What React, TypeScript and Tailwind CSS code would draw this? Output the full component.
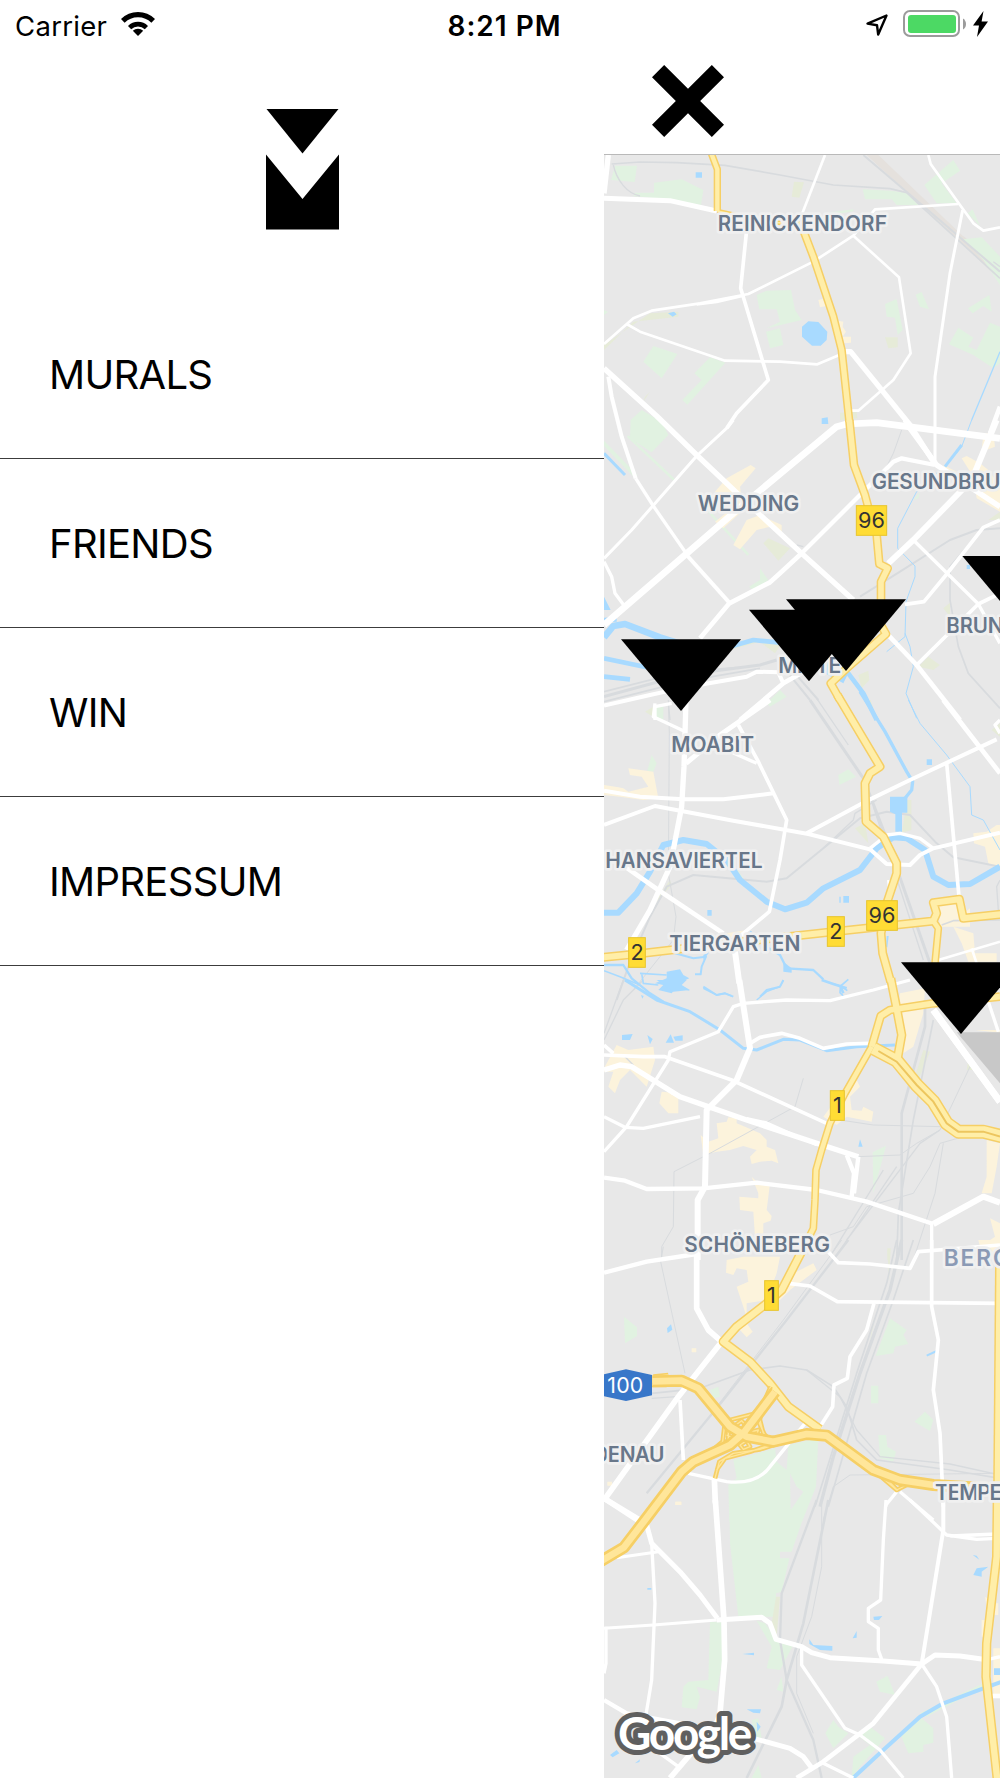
import { useState } from 'react';

const MENU_ITEMS = ['MURALS', 'FRIENDS', 'WIN', 'IMPRESSUM'];

type Line = [width: number, d: string];

interface MapSection {
  y: number;
  parks: string;
  scrub: string;
  areas: string;
  ponds: string;
  rivers: Line[];
  rails: Line[];
  streets: Line[];
  roads: Line[];
}

// The city map is split into horizontal sections, each with its own y origin
const SECTIONS: MapSection[] = [
  {
    y: 0,
    parks:
      'M45 47L111 47L104 96L33 90Z M162 98L245 88L310 120L303 165L215 150L100 138L105 128L162 128Z M788 118L870 122L920 128L955 165L890 165L875 148L795 148Z M1060 30L1080 62L1025 100L1070 160L1010 160L973 105Z M470 435L500 422L573 420L585 480L605 510L500 535L540 515L530 478L478 478Z M498 545L540 535L550 585L510 595Z M160 588L232 612L185 685L130 635Z M330 622L376 638L262 764L247 750L305 690L283 670Z M855 462L890 447L908 540L893 555L885 503L860 500Z M947 434L965 426L987 478L960 470Z M1104 475L1168 435L1175 485L1150 468L1118 490Z M1075 533L1120 563L1105 590L1130 600L1170 518L1200 530L1200 640L1180 655L1120 615L1047 583Z M1090 268L1145 262L1200 320L1200 405L1150 330Z M12 480L24 486L12 495Z M92 810L125 780L185 815L205 855L155 907L90 865Z M1103 190L1118 178L1140 228Z M670 190L760 178L760 184L690 196Z',
    scrub: 'M582 95L612 97L598 143L575 140Z M150 490L235 485L235 500L100 515L12 600L12 585Z M855 562L893 562L893 592L865 595Z M720 788L770 785L772 805L720 810Z M150 725L130 755L135 740Z',
    areas: 'M655 450L668 447L680 468L660 472Z M715 512L730 515L728 530L738 545L728 560L753 560L753 578L733 580Z',
    ponds: 'M287 67h19v16h-19z M625 514L655 516L682 545L680 570L662 587L636 587L606 560L606 530Z M204 490L222 485L230 493L218 500Z M665 805l18 -3l2 20l-20 0Z M675 235h20v15h-20z',
    rivers: [[4, 'M1200 605L1165 690L1115 810']],
    rails: [
      [5, 'M35 42L120 36L230 38L375 46L540 75L700 105L870 116L920 128L970 175L1200 385'],
      [6, 'M790 15L960 160L1200 365'],
      [4, 'M40 45C50 90 80 130 120 138'],
      [4, 'M1180 335L1200 350'],
    ],
    streets: [
      [16, 'M25 15L12 130'],
      [15, 'M12 145L210 152L350 183'],
      [16, 'M730 605L752 605L930 825L1000 935'],
      [16, 'M12 655L170 798L290 915'],
      [11, 'M440 240L422 415L505 690L410 790L380 835'],
      [8, 'M675 15L607 190'],
      [8, 'M985 15L992 42L1080 165L1120 220L1150 242L1200 232'],
      [8, 'M1075 162L825 178L760 257L640 335L445 432L300 460L155 482L100 505L12 582'],
      [8, 'M430 437L350 456L290 463'],
      [8, 'M760 257L897 382L932 610L880 690L775 782L750 782'],
      [9, 'M1088 180L1050 370L1005 680L1005 945'],
      [8, 'M80 522L120 545L375 632L540 635L652 643L725 612'],
      [12, 'M25 680L35 740L65 860L107 985'],
      [14, 'M1200 770L1170 850'],
    ],
    roads: [
      [22, 'M332 5L352 58L352 183'],
      [14, 'M352 183L430 200L480 215L600 222'],
      [25, 'M600 215L640 320L700 500L725 600L748 815'],
    ],
  },
  {
    y: 810,
    parks: 'M12 62L112 165L105 175L12 78Z M80 50L86 46L226 178L220 183Z M285 235L291 231L448 402L442 407Z M480 445L505 480L460 510L447 500L480 480Z M500 850L540 810L560 830L510 860Z M940 240L960 215L955 235Z',
    scrub: 'M490 370L505 355L570 385L535 422Z M955 740L985 710L1020 735L1000 750Z M1030 565L1050 548L1050 590Z M775 765L805 752L808 780L785 805Z M485 670h60l-20 30z M1165 300l35 -25v25z M135 875l25-15v30z M390 690l90-35v10z',
    areas:
      'M345 215L380 175L452 135L467 145L420 200L430 270L370 325L345 305L390 270Z M400 375L440 300L480 285L545 315L545 345L510 320L470 330L420 388Z M1085 115L1100 108L1140 130L1165 150L1200 200L1200 275L1130 235L1120 170Z M1150 40h30l5 40l-40 15z M1030 135l40 20l-20 20z',
    ponds: 'M690 700L745 760L730 790L675 760Z M12 530L32 570L12 570Z M1100 435h10v12h-10z',
    rivers: [
      [20, 'M12 652L40 618L75 612L180 652L300 690L400 672'],
      [14, 'M12 600L50 598M390 680L460 660L540 668'],
      [14, 'M12 715L140 742M12 770L90 778'],
      [9, 'M12 100L75 165'],
      [14, 'M700 740L745 760L790 820L830 900'],
      [3, 'M1115 0L1085 80L1040 135'],
      [9, 'M1085 75L1035 140'],
      [3, 'M1020 150L950 215L893 325L893 385L945 438L945 470L918 545L915 650L860 695'],
      [3, 'M915 640L930 680L940 740L918 820L950 895'],
    ],
    rails: [
      [6, 'M780 530L900 455L1050 360L1130 330L1200 325'],
      [3, 'M905 30L880 100L855 150'],
      [5, 'M1110 370L1050 440L1050 540L1075 680L1105 760L1200 865'],
      [9, 'M12 830L250 765L480 735L530 720'],
      [5, 'M12 845L250 785L480 745M12 815L250 755L450 740'],
      [6, 'M565 760L630 840M585 760L655 840'],
      [4, 'M210 900L205 850'],
      [4, 'M590 375L610 380'],
    ],
    streets: [
      [20, 'M12 615L440 245L710 20L740 12L830 8L1200 55'],
      [18, 'M865 430L940 360L1115 180L1190 0'],
      [16, 'M915 0L930 25L1010 135L1200 260'],
      [16, 'M290 105L470 275L605 400L760 540'],
      [13, 'M605 400L780 225L880 125L905 115L1005 135'],
      [14, 'M605 400L540 460L510 487L388 550L300 655'],
      [12, 'M260 405L390 550'],
      [9, 'M12 415L95 330L290 108L385 20L400 0'],
      [10, 'M12 425L35 470L45 520L75 560'],
      [10, 'M107 175L160 258L262 405'],
      [10, 'M940 360L1135 552L1200 670'],
      [11, 'M915 553L972 545L1038 465L1150 322L1200 300'],
      [14, 'M860 640L950 735L1080 900'],
      [11, 'M950 735L1135 552L1200 520'],
      [12, 'M12 857L150 825L240 805L440 770L470 755L535 757L550 790'],
      [14, 'M420 900L550 790L620 750'],
      [10, 'M165 900L165 860L215 850'],
    ],
    roads: [[26, 'M748 0L762 135L795 225L815 300L830 345L838 432L863 445L843 485L843 540L840 610L858 642L740 745L692 790L720 840']],
  },
  {
    y: 1650,
    parks: 'M165 20L190 15L190 60L165 60Z M155 165L170 190L160 215L142 212Z M715 225L745 208L768 230L718 255Z M410 505L430 535L415 530Z',
    scrub: 'M765 385L795 370L805 430Z M920 300h14v90l-28 8z M155 620L210 540L215 555Z M1175 90l25 -20v40z M800 0l12 0l12 40z',
    areas:
      'M85 205L160 215L175 295L130 300L60 290L12 285L12 255L55 262L70 265L85 275L145 260L125 230L90 225Z M1120 400L1160 395L1190 375L1200 375L1200 510L1165 490L1155 440L1122 430Z M1015 615L1078 605L1090 640L1110 625L1110 680L1020 680Z M1060 680L1120 700L1125 760L1190 760L1190 785L1105 785L1085 730Z M380 700L440 690L460 750L390 752Z',
    ponds:
      'M870 290h52v48h-16v57h-20v-52l-16-8z M718 590h4v18h-4z M730 588h17v20h-17z M322 630h13v17h-13z M980 178h16v17h-16z M200 815L240 808L250 825L268 835L235 850L270 873L230 862L215 880L175 870L190 855L165 850L200 835Z M550 785L575 805L575 818L550 815Z M310 765L328 757L310 780Z M860 708h6l-4 34h-4z',
    rivers: [
      [18, 'M12 638L55 638L110 580L150 515L190 435L250 420L320 432L380 480L420 540L500 605L555 628L620 608L670 565L780 510L830 445L880 412L920 415L975 450L1000 530L1045 555L1110 552L1200 500'],
      [10, 'M780 -25L855 95L920 215L938 245L935 270L915 295'],
      [3, 'M925 0L960 70L1040 165L1110 260L1115 345L1150 360L1200 450'],
      [7, 'M12 795L70 795L95 835L150 880L190 905'],
      [5, 'M12 812L60 830L120 855M120 820L200 825M125 820L130 850L175 855'],
      [6, 'M225 760L280 775L318 770L305 800L302 823L285 823'],
      [7, 'M450 695L500 740L540 765L560 805L640 810L670 838'],
      [5, 'M700 852L722 858L745 838M722 858L742 872M722 855L720 878L730 888'],
      [5, 'M310 865L350 885L375 880L395 888'],
      [4, 'M550 842L540 860L500 875L470 900'],
    ],
    rails: [
      [3, 'M205 0L208 100L205 520L228 650L220 720L100 870'],
      [6, 'M50 900L85 800L150 650L200 560L280 525L500 545L560 535L780 355L860 335L930 345L1010 430L1060 472L1200 500'],
      [4, 'M670 445L760 360L765 340L830 300'],
      [9, 'M630 0L790 235L850 390L990 790'],
      [4, 'M820 320L970 780M650 -5L745 135M1200 540L1190 560L1195 630'],
      [5, 'M1025 675L1060 662L1200 660'],
    ],
    streets: [
      [16, 'M258 0L252 200L245 320L210 500L150 630L80 750'],
      [12, 'M12 272L120 290L250 298L370 298L520 280'],
      [12, 'M12 375L165 318L400 362L625 402L810 448L860 492L930 495L960 465L1000 445L1200 398'],
      [12, 'M620 400L790 308L930 240L1190 118'],
      [11, 'M415 75L475 185L560 360L540 480L508 635L400 725'],
      [15, 'M258 190L360 105L510 0'],
      [14, 'M75 500L175 570L370 700'],
      [10, 'M165 10L160 50L250 92M380 150L470 190'],
      [10, 'M810 445L860 405L900 400L960 415L1000 445'],
      [11, 'M1040 190L1078 600'],
      [14, 'M1030 0L1200 220'],
      [18, 'M405 755L418 850'],
      [8, 'M1015 780L1200 725M865 540L870 590M1115 745l15 45'],
      [10, 'M1200 60L1185 75L1200 100'],
    ],
    roads: [
      [27, 'M712 -15L840 200L810 220L795 250L798 365L850 410L890 490L890 520L860 610L843 700L848 760L872 845'],
      [27, 'M0 773L110 762L400 728L700 695L1000 663L1010 640L1000 608L1078 598L1090 655L1210 642'],
      [23, 'M1000 663L1015 685L1005 790'],
    ],
  },
  {
    y: 2490,
    parks: 'M818 517L858 497L820 640Z',
    scrub: 'M970 210L990 215L955 300L948 280Z M1105 240l15 30l-20 0z M862 810h8v30h-8z',
    areas:
      'M50 195L85 210L160 200L165 240L140 320L90 270L60 300L45 340L25 320L40 275L12 275L12 265Z M185 335L235 340L235 400L205 400L178 370Z M350 430L380 425L385 412L410 415L410 430L435 440L480 460L500 480L500 500L525 510L535 550L515 542L480 545L455 552L450 530L470 510L430 498L390 510L350 515L310 525L302 465L325 485L355 475Z M455 590L470 605L510 610L500 690L515 708L512 722L490 730L490 770L465 770L460 695L420 690L418 650L475 655L475 640Z M770 300L780 320L750 350L755 390L785 392L790 380L820 395L815 425L740 410L710 435L670 410L700 370Z M900 40L975 25L970 100L940 200L910 220L895 90Z M1160 480L1200 490L1190 560L1175 640L1145 640L1160 590Z M1170 715L1200 730V830L1140 800L1185 770Z M1125 150h75v8z',
    ponds: 'M170 0L220 35L270 30L245 15L260 0Z M66 165l32 -3l-8 18l-24 0z M197 188l15-25l10 25z M220 170l28 -4l0 16l-22 0z M142 165l16 12l-8 16z M775 500l5-22l8 22z M123 45l8 3l-4 8z',
    rivers: [
      [9, 'M75 0L170 60L270 95L360 150L430 205L470 210L550 178L600 180L680 212L770 200L885 195'],
      [6, 'M310 20L350 45L375 40L400 50M480 50L500 30L540 20L550 0'],
      [8, 'M665 0L700 12L740 25M720 15L730 40'],
    ],
    rails: [
      [4, 'M12 160L70 0M12 180L70 60L130 0'],
      [8, 'M975 60L975 140L905 400L905 840'],
      [5, 'M1000 120L940 420L895 700L890 840'],
      [3, 'M610 295L585 380L330 520L222 575L220 740L185 800L185 840'],
      [3, 'M720 420L820 435L1020 440M775 530L900 525L950 490L1020 450L1110 260'],
      [4, 'M700 840L890 560M690 830L850 570M740 780L960 490L1020 450'],
      [3, 'M1090 470L1020 490L990 560L940 640L800 680L760 740L690 765M1030 490L1005 640L940 840'],
      [4, 'M75 230L100 255'],
    ],
    streets: [
      [18, 'M418 0L450 205L410 300L320 390L315 620L293 660L293 840'],
      [16, 'M12 270L60 255L95 260L240 350L440 420L650 490L775 530'],
      [8, 'M215 340L320 380M440 415L500 428L650 495'],
      [11, 'M12 225L130 230L195 230L395 300L680 430M12 195L40 220'],
      [10, 'M12 515L80 440L205 240L210 215L355 155L400 80L430 70L560 60L690 62L820 30L930 0'],
      [11, 'M450 190L480 172L545 160L600 175L670 205L740 192L810 190'],
      [10, 'M12 410L75 442L130 445L300 410'],
      [13, 'M12 593L75 602L140 627L310 625L470 608L650 630L800 665L1000 732'],
      [18, 'M1000 732L1150 650L1200 668'],
      [13, 'M740 525L762 580L755 650M775 530L762 640'],
      [20, 'M1000 90L1200 365'],
      [10, 'M995 732L995 840M1165 65L1195 155'],
    ],
    roads: [
      [28, 'M872 -5L888 75L905 165L893 232'],
      [26, 'M1200 50L1000 70L870 90L842 108L815 200'],
      [23, 'M815 200L735 340L690 430L665 510L648 570L645 660L640 745L608 810'],
      [42, 'M820 205L890 242L950 315L1000 365L1040 430L1075 455L1150 455L1210 470'],
    ],
  },
  {
    y: 3270,
    parks:
      'M72 230L111 262L111 288L75 310Z M870 235L920 270L910 285L925 312L885 320L880 340L827 348Z M813 437h22v53h-22z M835 585L858 585L862 620L888 635L880 665L840 655Z M975 515L1000 540L990 573L943 545Z M400 660L525 625L530 665L560 690L565 615L655 595L648 740L606 845L388 845L385 735L410 715Z M330 450L355 440L360 470L340 475Z',
    scrub: 'M862 25h10l-5 100z M820 240l4 0l-15 70z',
    areas:
      'M380 60L430 50L540 50L530 100L500 180L440 190L440 230L410 140L445 125L440 90L410 85L400 105L378 98Z M560 130L580 100L640 70L650 90L570 150L540 180L520 170Z M415 265L440 250L458 275L440 292Z M275 325h14v12h-14z M226 785h18v10h-18z M1135 0h65v20h-60z M22 725h14v12h-14z',
    ponds: 'M201 265l12-12l4 16l-14 10z',
    rivers: [[6, 'M980 347L1010 333']],
    rails: [
      [7, 'M745 0L560 240L370 480L140 760'],
      [3, 'M725 0L550 240L350 500'],
      [5, 'M155 460L300 445L450 390L540 378L620 390L700 440L740 500L770 600L830 660L1050 690L1200 715'],
      [4, 'M620 390L720 470L770 570L840 650L1050 672L1200 705M155 475L230 470'],
      [10, 'M905 0L870 150L780 400L700 650L660 800'],
      [5, 'M890 0L860 130L770 400L645 800M940 0L880 180L800 400L685 800'],
      [3, 'M190 20L182 65L255 400M670 840L700 740L750 705L1200 700'],
    ],
    streets: [
      [13, 'M12 98L140 65L290 42'],
      [17, 'M290 40L290 205L325 270L365 305L235 470L12 780'],
      [11, 'M240 480L250 660'],
      [16, 'M12 775L120 840'],
      [10, 'M265 700L380 725Q470 735 510 680L615 550'],
      [17, 'M343 715L346 790'],
      [11, 'M680 30L715 68L810 72L930 85L955 35L1200 15'],
      [11, 'M565 130L630 138L712 185L1200 190'],
      [11, 'M822 190L800 270L750 350L742 415L702 435L698 500L660 560'],
      [11, 'M995 0L995 200L1015 300L1000 450L1020 580L1030 800'],
      [10, 'M890 755L858 795L858 800M900 755L1000 840'],
    ],
    roads: [
      [28, 'M610 25L545 150L500 190L410 260L370 305L450 365L510 430L565 500L660 568'],
      [22, 'M1200 75L1200 300'],
      [26, 'M1198 80L1192 800'],
    ],
  },
  {
    y: 4050,
    parks:
      'M388 0L628 0L575 155H540V175H568L545 275L528 280L528 350L415 350L390 130Z M330 365L365 365L368 480L350 575L290 560L300 590L290 628L245 622L250 560L265 545L325 540Z M470 362L495 370L530 420L580 435L540 510L500 505L515 440Z M829 545L863 527L885 585L840 575Z M676 700L700 660L715 680L745 700L700 745Z M760 770L810 735L770 705L810 680L855 715L780 800L755 834Z M900 700L960 650L1000 685L1000 728L970 735L970 755L925 760Z M455 834L475 795L485 834Z M530 570L545 530L550 575Z M455 660L475 655L485 715L465 720Z M960 640L1150 550L1150 562L980 650Z',
    scrub: 'M528 290h12l-10 120l-15 -40z',
    areas: 'M1155 290l15 10l-10 20z M1180 310h15v35h-15z M1145 360h10v50h-10z M1180 445h20v140h-20z M226 5h18v10h-18z',
    ponds:
      'M628 418L640 435L697 438L697 452L660 450L628 432Z M820 350l27-2l-10 12l-15 0z M758 415l12-22l0 20z M1120 225L1130 205L1165 200L1145 215L1145 230Z M427 462l35 -4v8z M440 628h43l-3 12l-20-2z M470 665l12 15l-10 15z M30 765l20-15l8 10l-20 12z M105 790l15-12l-2 8z M1182 505h18v20h-18z M1118 165l12 2l8 12z M142 264h12v5h-12z',
    rivers: [[12, 'M755 838L850 750L960 650L1030 610L1150 565L1205 545']],
    rails: [
      [7, 'M650 0L545 280L540 420L560 540L640 720L665 834'],
      [8, 'M685 0L610 370L560 540L545 620L440 834'],
      [3, 'M665 0L665 200L635 350L590 470L590 580L640 700'],
    ],
    streets: [
      [16, 'M12 -5L120 65'],
      [15, 'M140 75L155 130L240 215L300 285L352 355'],
      [17, 'M346 0L372 360L374 480L360 640L350 670L210 834'],
      [10, 'M155 130L165 310L155 540L137 650'],
      [9, 'M50 173L175 155M12 385L160 375L350 360'],
      [15, 'M350 360L485 352L510 370L528 418L605 440L635 458L690 473L850 483L965 492L1005 465L1080 468L1150 478'],
      [10, 'M18 380L18 490L12 520'],
      [13, 'M12 600L80 640L240 670'],
      [10, 'M180 760L235 800'],
      [15, 'M460 715L570 745L610 770L640 810'],
      [10, 'M605 440L605 495L735 685L780 705L840 750L910 834'],
      [14, 'M590 834L670 785L820 670L965 492'],
      [12, 'M965 492L1030 90L1030 0'],
      [10, 'M965 492L1010 560L1040 650L1055 834'],
      [10, 'M930 0L1040 105L1130 118L1190 115M1050 108L1190 102'],
      [10, 'M858 0L850 120L842 300L805 325L805 365L835 385L835 450L845 478'],
      [10, 'M670 790L760 834M1165 478L1200 470'],
      [14, 'M1170 588h30'],
    ],
    roads: [[28, 'M1192 -10L1190 170L1160 430L1158 530L1192 840']],
  },
];

// Motorway and its interchange, in map coordinates
const RAMPS = [
  'M345 3985L358 3935L400 3910L480 3898L560 3872M350 3960L375 3925L450 3905L510 3885',
  'M370 3815L460 3792L490 3760L512 3710M375 3815L368 3875L320 3915M385 3822L385 3870L350 3905',
  'M475 3790L490 3850L510 3870M485 3775L478 3820L500 3868',
  'M155 3705L200 3705M160 3680L205 3675',
  'M820 3960L890 4020L920 4005M700 3860L840 3965L893 4022',
  'M400 3830L425 3812L440 3830L418 3842ZM380 3855L400 3865L385 3880M455 3845L475 3840L468 3860ZM420 3885L440 3872L450 3890L430 3898Z',
];

const MOTORWAY = [
  'M157 3694L245 3692L295 3715L390 3830L440 3860L520 3875L620 3852L680 3857L820 3960L900 3990L1000 4005L1210 4018',
  'M0 4235L72 4192L135 4110L245 3965L280 3935L390 3885L430 3850L525 3725',
];

// x, baseline, width, text
const DISTRICTS: [number, number, number, string][] = [
  [353, 243, 508, 'REINICKENDORF'],
  [293, 1084, 305, 'WEDDING'],
  [815, 1017, 386, 'GESUNDBRU'],
  [535, 1569, 189, 'MITTE'],
  [1039, 1450, 172, 'BRUN'],
  [214, 1807, 248, 'MOABIT'],
  [16, 2154, 472, 'HANSAVIERTEL'],
  [208, 2402, 393, 'TIERGARTEN'],
  [253, 3306, 437, 'SCHÖNEBERG'],
  [-20, 3936, 213, 'DENAU'],
  [1005, 4051, 202, 'TEMPE'],
];

const SHIELDS: [number, number, number, string][] = [
  [768, 1066, 93, '96'],
  [799, 2251, 94, '96'],
  [681, 2299, 53, '2'],
  [85, 2362, 52, '2'],
  [690, 2821, 44, '1'],
  [493, 3391, 43, '1'],
];

// top left corner of each mural pin
const PINS: [number, number][] = [
  [63, 1468],
  [447, 1379],
  [558, 1348],
  [1087, 1218],
  [903, 2437],
];

function Lines({ name, stroke, inset = 0 }: { name: 'rivers' | 'rails' | 'streets' | 'roads'; stroke: string; inset?: number }) {
  return (
    <g fill="none" stroke={stroke} strokeLinejoin="round">
      {SECTIONS.map((section) => (
        <g key={section.y} transform={`translate(0 ${section.y})`}>
          {section[name].map(([width, d]) => (
            <path key={d} d={d} strokeWidth={width - inset} />
          ))}
        </g>
      ))}
    </g>
  );
}

function Areas({ name, fill }: { name: 'parks' | 'scrub' | 'areas' | 'ponds'; fill: string }) {
  return (
    <g fill={fill}>
      {SECTIONS.map((section) => (
        <path key={section.y} d={section[name]} transform={`translate(0 ${section.y})`} />
      ))}
    </g>
  );
}

function CityMap() {
  return (
    <svg className="block w-[396px] h-[1623px] font-['Inter',sans-serif]" viewBox="12 15 1188 4869">
      <rect x="0" y="0" width="1200" height="4890" fill="#e8e8e8" />
      <path d="M800 15L835 15L1085 255L1200 340L1200 390L1085 280Z" fill="#e5e1dd" />
      <Areas name="parks" fill="#e1f2e1" />
      <Areas name="scrub" fill="#e6ebd8" />
      <Areas name="areas" fill="#fcf3dc" />
      <path d="M570 3970L590 4010L610 4025L572 4080Z" fill="#e8e8e8" />
      <Lines name="rails" stroke="#d8dbde" />
      <Areas name="ponds" fill="#a8daff" />
      <Lines name="rivers" stroke="#a8daff" />
      <Lines name="streets" stroke="#ffffff" />
      <Lines name="roads" stroke="#f6cf65" />
      <Lines name="roads" stroke="#ffeea8" inset={9} />
      <path
        d="M835 2703L890 2735L950 2805L1000 2855L1040 2920L1075 2945L1150 2945L1200 2960"
        fill="none"
        stroke="#edc65f"
        strokeWidth="6"
      />
      <g fill="none" strokeLinejoin="round">
        <path d={RAMPS.join('')} stroke="#f6cf65" strokeWidth="14" />
        <path d={RAMPS.join('')} stroke="#ffe69a" strokeWidth="4" />
        <path d={MOTORWAY.join('')} stroke="#f6cf65" strokeWidth="36" />
        <path d={MOTORWAY.join('')} stroke="#ffe69a" strokeWidth="20" />
      </g>

      {/* District names */}
      <g fill="#68778a" stroke="#f0f0f0" strokeWidth="16" strokeLinejoin="round" paintOrder="stroke" fontSize="63" fontWeight="600">
        {DISTRICTS.map(([x, y, width, name]) => (
          <text key={name} x={x} y={y} textLength={width}>
            {name}
          </text>
        ))}
        <text x="1031" y="3347" fill="#8b9ab5" fontSize="68" letterSpacing="6">
          BERG
        </text>
      </g>

      {/* Road shields */}
      {SHIELDS.map(([x, y, width, label]) => (
        <g key={`${x}-${y}`}>
          <rect x={x + 1} y={y + 1} width={width - 2} height="89" fill="#ffdc35" stroke="#e8c52e" strokeWidth="3" />
          <text x={x + width / 2} y={y + 69} textAnchor="middle" fontSize="65" fill="#333333">
            {label}
          </text>
        </g>
      ))}
      <path d="M0 3675L78 3658L156 3675V3736L78 3753L0 3736Z" fill="#3877c9" />
      <text x="22" y="3728" textLength="108" fontSize="64" fill="#ffffff">
        100
      </text>

      {/* Mural pins */}
      <path d="M1070 2647H1200V2800Z" fill="#c8c8c8" />
      <path d="M1000 2580L1200 2855" stroke="#ffffff" strokeWidth="20" />
      {PINS.map(([x, y]) => (
        <path key={x} d="M0 0H360L180 215Z" transform={`translate(${x} ${y})`} />
      ))}

      <text
        x="54"
        y="4799"
        fontSize="138"
        fontWeight="700"
        letterSpacing="-7"
        fill="#ffffff"
        stroke="#5f5f5f"
        strokeWidth="30"
        strokeLinejoin="round"
        paintOrder="stroke"
        className="font-['Lato',sans-serif]"
      >
        Google
      </text>
    </svg>
  );
}

function StatusBar() {
  return (
    <div className="h-[50px] grid grid-cols-3 items-start pl-[15px] pr-[12px] text-[27px] leading-[52px]">
      <div className="flex items-center">
        <span className="w-[92px] text-[27.5px] tracking-[0.3px]">Carrier</span>
        <svg className="ml-[14px] w-[34px] h-[24px] -mt-1" viewBox="0 0 34 24">
          <path d="M17 24L11.8 18.8A7.4 7.4 0 0 1 22.2 18.8Z" />
          <path d="M8.6 15.6A12 12 0 0 1 25.4 15.6" fill="none" stroke="#000" strokeWidth="4.6" />
          <path d="M1.8 8.9A21.5 21.5 0 0 1 32.2 8.9" fill="none" stroke="#000" strokeWidth="5.2" />
        </svg>
      </div>
      <div className="pl-[6px] text-center text-[28px] font-semibold tracking-[1px] whitespace-nowrap">8:21 PM</div>
      <div className="h-[48px] flex items-center justify-end">
        <svg className="w-[24px] h-[24px] mt-0.5" viewBox="0 0 24 24">
          <path d="M21.5 2.5L2.5 10.6L12 12.2L13.2 21.5Z" fill="none" stroke="#000" strokeWidth="2.4" strokeLinejoin="round" />
        </svg>
        <svg className="ml-[14px] w-[64px] h-[28px]" viewBox="0 0 64 28">
          <rect x="1" y="1" width="55" height="25" rx="6" fill="none" stroke="#9b9b9b" strokeWidth="2" />
          <rect x="5" y="5" width="48" height="18" rx="3" fill="#4cd964" />
          <path d="M60 8.5Q63 10.5 63 14Q63 17.5 60 19.5Z" fill="#9b9b9b" />
        </svg>
        <svg className="ml-[6px] w-[15px] h-[26px]" viewBox="0 0 15 26">
          <path d="M10.5 0L0 14.5H6L4 26L15 10.5H8.6Z" />
        </svg>
      </div>
    </div>
  );
}

function Logo() {
  return (
    <svg className="w-[73px] h-[121px]" viewBox="0 0 73 121">
      <path d="M0.5 0H72.5L36.5 44.5Z" />
      <path d="M0 45.5L36.5 90L73 45.5V120.5H0Z" />
    </svg>
  );
}

function App() {
  const [active, setActive] = useState<string | null>(null);

  return (
    <div className="w-[1000px] h-[1778px] overflow-hidden bg-white text-black font-['Inter',sans-serif]">
      <StatusBar />

      <div className="flex h-[1728px]">
        {/* Drawer */}
        <aside className="w-[604px] shrink-0 bg-white">
          <div className="h-[240px] pt-[59px] flex justify-center">
            <Logo />
          </div>
          <nav className="flex flex-col">
            {MENU_ITEMS.map((item) => (
              <button
                key={item}
                aria-current={active === item}
                onClick={() => setActive(item)}
                className="h-[169px] pt-[1px] pl-[49px] flex items-center text-left text-[40px] tracking-[-0.7px] border-b border-[#3c3c3c]"
              >
                {item}
              </button>
            ))}
          </nav>
        </aside>

        {/* Map */}
        <main className="flex-1 min-w-0">
          <div className="h-[105px] pt-[15px] pl-[48px] border-b border-[#b9b9b9]">
            <button aria-label="Close menu" className="block">
              <svg className="w-[72px] h-[72px]" viewBox="0 0 71 71">
                <path d="M12 0L35.5 23.5L59 0L71 12L47.5 35.5L71 59L59 71L35.5 47.5L12 71L0 59L23.5 35.5L0 12Z" />
              </svg>
            </button>
          </div>
          <CityMap />
        </main>
      </div>
    </div>
  );
}

export default App;
